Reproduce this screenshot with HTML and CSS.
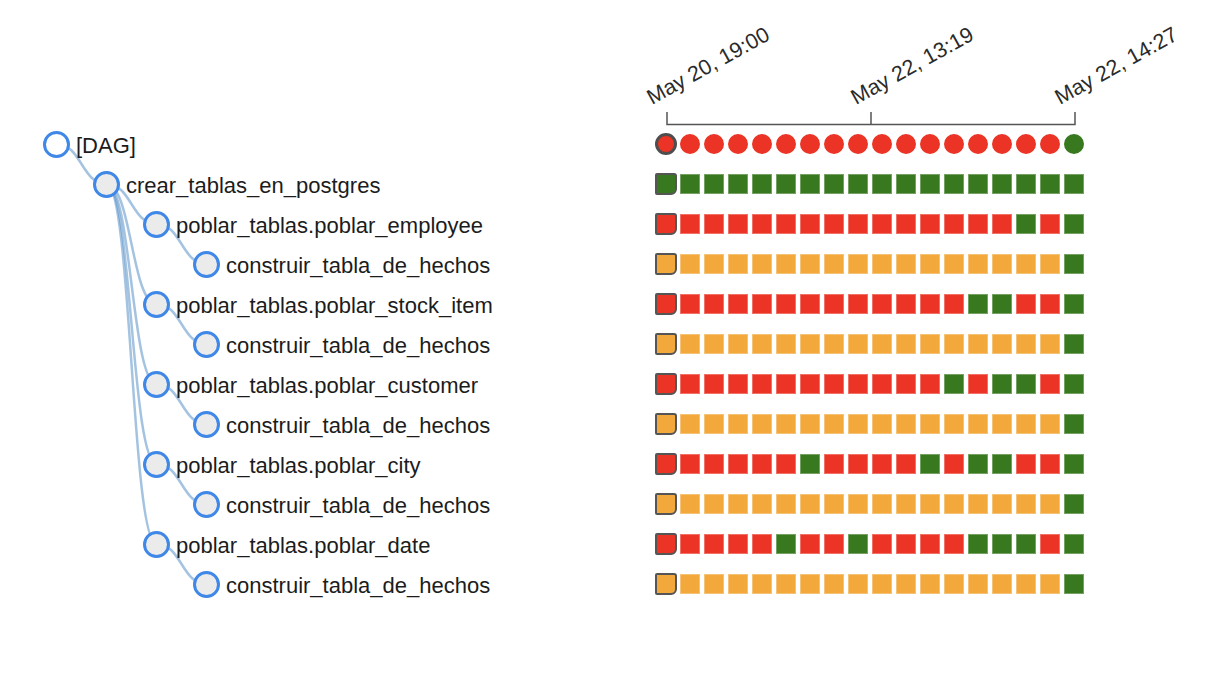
FILE: index.html
```html
<!DOCTYPE html>
<html lang="es">
<head>
<meta charset="utf-8">
<title>Tree view</title>
<link rel="stylesheet" href="styles.css">
</head>
<body>
<main class="view">
  <section class="tree">
    <svg class="links" width="656" height="620" viewBox="0 0 656 620">
      <path d="M56.5,144 C81.5,144 81.5,184 106.5,184"/>
      <path d="M106.5,184 C131.5,184 131.5,224 156.5,224"/>
      <path d="M106.5,184 C131.5,184 131.5,304 156.5,304"/>
      <path d="M106.5,184 C131.5,184 131.5,384 156.5,384"/>
      <path d="M106.5,184 C131.5,184 131.5,464 156.5,464"/>
      <path d="M106.5,184 C131.5,184 131.5,544 156.5,544"/>
      <path d="M156.5,224 C181.5,224 181.5,264 206.5,264"/>
      <path d="M156.5,304 C181.5,304 181.5,344 206.5,344"/>
      <path d="M156.5,384 C181.5,384 181.5,424 206.5,424"/>
      <path d="M156.5,464 C181.5,464 181.5,504 206.5,504"/>
      <path d="M156.5,544 C181.5,544 181.5,584 206.5,584"/>
    </svg>
    <ul class="nodes">
      <li class="node lvl0 dag"><span class="dot"></span><span class="label">[DAG]</span></li>
      <li class="node lvl1"><span class="dot"></span><span class="label">crear_tablas_en_postgres</span></li>
      <li class="node lvl2"><span class="dot"></span><span class="label">poblar_tablas.poblar_employee</span></li>
      <li class="node lvl3"><span class="dot"></span><span class="label">construir_tabla_de_hechos</span></li>
      <li class="node lvl2"><span class="dot"></span><span class="label">poblar_tablas.poblar_stock_item</span></li>
      <li class="node lvl3"><span class="dot"></span><span class="label">construir_tabla_de_hechos</span></li>
      <li class="node lvl2"><span class="dot"></span><span class="label">poblar_tablas.poblar_customer</span></li>
      <li class="node lvl3"><span class="dot"></span><span class="label">construir_tabla_de_hechos</span></li>
      <li class="node lvl2"><span class="dot"></span><span class="label">poblar_tablas.poblar_city</span></li>
      <li class="node lvl3"><span class="dot"></span><span class="label">construir_tabla_de_hechos</span></li>
      <li class="node lvl2"><span class="dot"></span><span class="label">poblar_tablas.poblar_date</span></li>
      <li class="node lvl3"><span class="dot"></span><span class="label">construir_tabla_de_hechos</span></li>
    </ul>
  </section>
  <section class="grid">
    <svg class="axis" width="564" height="124" viewBox="0 0 564 124">
      <path class="domain" d="M11,112 V124.5 H419 V112 M215,124.5 V112"/>
      <text transform="translate(-4,105) rotate(-29)">May 20, 19:00</text>
      <text transform="translate(200,105) rotate(-29)">May 22, 13:19</text>
      <text transform="translate(404,105) rotate(-29)">May 22, 14:27</text>
    </svg>
    <div class="row dagrow">
      <span class="cell run f first"></span><span class="cell run f"></span><span class="cell run f"></span><span class="cell run f"></span><span class="cell run f"></span><span class="cell run f"></span><span class="cell run f"></span><span class="cell run f"></span><span class="cell run f"></span><span class="cell run f"></span><span class="cell run f"></span><span class="cell run f"></span><span class="cell run f"></span><span class="cell run f"></span><span class="cell run f"></span><span class="cell run f"></span><span class="cell run f"></span><span class="cell run s"></span>
    </div>
    <div class="row">
      <span class="cell s first"></span><span class="cell s"></span><span class="cell s"></span><span class="cell s"></span><span class="cell s"></span><span class="cell s"></span><span class="cell s"></span><span class="cell s"></span><span class="cell s"></span><span class="cell s"></span><span class="cell s"></span><span class="cell s"></span><span class="cell s"></span><span class="cell s"></span><span class="cell s"></span><span class="cell s"></span><span class="cell s"></span><span class="cell s"></span>
    </div>
    <div class="row">
      <span class="cell f first"></span><span class="cell f"></span><span class="cell f"></span><span class="cell f"></span><span class="cell f"></span><span class="cell f"></span><span class="cell f"></span><span class="cell f"></span><span class="cell f"></span><span class="cell f"></span><span class="cell f"></span><span class="cell f"></span><span class="cell f"></span><span class="cell f"></span><span class="cell f"></span><span class="cell s"></span><span class="cell f"></span><span class="cell s"></span>
    </div>
    <div class="row">
      <span class="cell u first"></span><span class="cell u"></span><span class="cell u"></span><span class="cell u"></span><span class="cell u"></span><span class="cell u"></span><span class="cell u"></span><span class="cell u"></span><span class="cell u"></span><span class="cell u"></span><span class="cell u"></span><span class="cell u"></span><span class="cell u"></span><span class="cell u"></span><span class="cell u"></span><span class="cell u"></span><span class="cell u"></span><span class="cell s"></span>
    </div>
    <div class="row">
      <span class="cell f first"></span><span class="cell f"></span><span class="cell f"></span><span class="cell f"></span><span class="cell f"></span><span class="cell f"></span><span class="cell f"></span><span class="cell f"></span><span class="cell f"></span><span class="cell f"></span><span class="cell f"></span><span class="cell f"></span><span class="cell f"></span><span class="cell s"></span><span class="cell s"></span><span class="cell f"></span><span class="cell f"></span><span class="cell s"></span>
    </div>
    <div class="row">
      <span class="cell u first"></span><span class="cell u"></span><span class="cell u"></span><span class="cell u"></span><span class="cell u"></span><span class="cell u"></span><span class="cell u"></span><span class="cell u"></span><span class="cell u"></span><span class="cell u"></span><span class="cell u"></span><span class="cell u"></span><span class="cell u"></span><span class="cell u"></span><span class="cell u"></span><span class="cell u"></span><span class="cell u"></span><span class="cell s"></span>
    </div>
    <div class="row">
      <span class="cell f first"></span><span class="cell f"></span><span class="cell f"></span><span class="cell f"></span><span class="cell f"></span><span class="cell f"></span><span class="cell f"></span><span class="cell f"></span><span class="cell f"></span><span class="cell f"></span><span class="cell f"></span><span class="cell f"></span><span class="cell s"></span><span class="cell f"></span><span class="cell s"></span><span class="cell s"></span><span class="cell f"></span><span class="cell s"></span>
    </div>
    <div class="row">
      <span class="cell u first"></span><span class="cell u"></span><span class="cell u"></span><span class="cell u"></span><span class="cell u"></span><span class="cell u"></span><span class="cell u"></span><span class="cell u"></span><span class="cell u"></span><span class="cell u"></span><span class="cell u"></span><span class="cell u"></span><span class="cell u"></span><span class="cell u"></span><span class="cell u"></span><span class="cell u"></span><span class="cell u"></span><span class="cell s"></span>
    </div>
    <div class="row">
      <span class="cell f first"></span><span class="cell f"></span><span class="cell f"></span><span class="cell f"></span><span class="cell f"></span><span class="cell f"></span><span class="cell s"></span><span class="cell f"></span><span class="cell f"></span><span class="cell f"></span><span class="cell f"></span><span class="cell s"></span><span class="cell f"></span><span class="cell s"></span><span class="cell s"></span><span class="cell f"></span><span class="cell f"></span><span class="cell s"></span>
    </div>
    <div class="row">
      <span class="cell u first"></span><span class="cell u"></span><span class="cell u"></span><span class="cell u"></span><span class="cell u"></span><span class="cell u"></span><span class="cell u"></span><span class="cell u"></span><span class="cell u"></span><span class="cell u"></span><span class="cell u"></span><span class="cell u"></span><span class="cell u"></span><span class="cell u"></span><span class="cell u"></span><span class="cell u"></span><span class="cell u"></span><span class="cell s"></span>
    </div>
    <div class="row">
      <span class="cell f first"></span><span class="cell f"></span><span class="cell f"></span><span class="cell f"></span><span class="cell f"></span><span class="cell s"></span><span class="cell f"></span><span class="cell f"></span><span class="cell s"></span><span class="cell f"></span><span class="cell f"></span><span class="cell f"></span><span class="cell f"></span><span class="cell s"></span><span class="cell s"></span><span class="cell s"></span><span class="cell f"></span><span class="cell s"></span>
    </div>
    <div class="row">
      <span class="cell u first"></span><span class="cell u"></span><span class="cell u"></span><span class="cell u"></span><span class="cell u"></span><span class="cell u"></span><span class="cell u"></span><span class="cell u"></span><span class="cell u"></span><span class="cell u"></span><span class="cell u"></span><span class="cell u"></span><span class="cell u"></span><span class="cell u"></span><span class="cell u"></span><span class="cell u"></span><span class="cell u"></span><span class="cell s"></span>
    </div>
  </section>
</main>
</body>
</html>
```
FILE: styles.css
```css
html, body {
  margin: 0;
  padding: 0;
  background: #ffffff;
}

body {
  font-family: "Liberation Sans", Arial, sans-serif;
  color: #1c1c1c;
}

.view {
  display: flex;
  width: 1220px;
  height: 680px;
  overflow: hidden;
}

/* ---------- tree ---------- */
.tree {
  position: relative;
  width: 656px;
  flex: none;
  padding-top: 124px;
  box-sizing: border-box;
}

.links {
  position: absolute;
  left: 0;
  top: 0;
}

.links path {
  fill: none;
  stroke: rgba(90, 145, 200, 0.55);
  stroke-width: 2.5;
}

.nodes {
  position: relative;
  list-style: none;
  margin: 0;
  padding: 0;
}

.node {
  display: flex;
  align-items: center;
  height: 40px;
}

.lvl0 { padding-left: 43px; }
.lvl1 { padding-left: 93px; }
.lvl2 { padding-left: 143px; }
.lvl3 { padding-left: 193px; }

.dot {
  flex: none;
  width: 21px;
  height: 21px;
  border: 3px solid #3f88e8;
  border-radius: 50%;
  background: #ebebeb;
}

.dag .dot {
  background: #ffffff;
}

.label {
  margin-left: 6px;
  padding-top: 3px;
  font-size: 22px;
  white-space: nowrap;
}

/* ---------- grid ---------- */
.grid {
  flex: 1;
}

.axis {
  display: block;
  overflow: visible;
}

.axis .domain {
  fill: none;
  stroke: #555555;
  stroke-width: 1.5;
}

.axis text {
  font-family: "Liberation Sans", Arial, sans-serif;
  font-size: 21.5px;
  fill: #2a2a2a;
}

.row {
  display: flex;
  align-items: center;
  gap: 4px;
  height: 40px;
}

.cell {
  flex: none;
  width: 20px;
  height: 20px;
  box-sizing: border-box;
  box-shadow: inset 0 0 0 1px rgba(255, 255, 255, 0.3);
}

.cell.run {
  border-radius: 50%;
  box-shadow: none;
}

.cell.first {
  width: 22px;
  height: 22px;
  margin: 0 -1px;
  border: 2px solid #555555;
  border-radius: 2px 3px 6px 2px;
  box-shadow: none;
}

.cell.run.first {
  border: 3px solid #4e4e4e;
  border-radius: 50%;
}

.s { background: #38791f; }
.f { background: #eb3426; }
.u { background: #f3a83b; }
```
